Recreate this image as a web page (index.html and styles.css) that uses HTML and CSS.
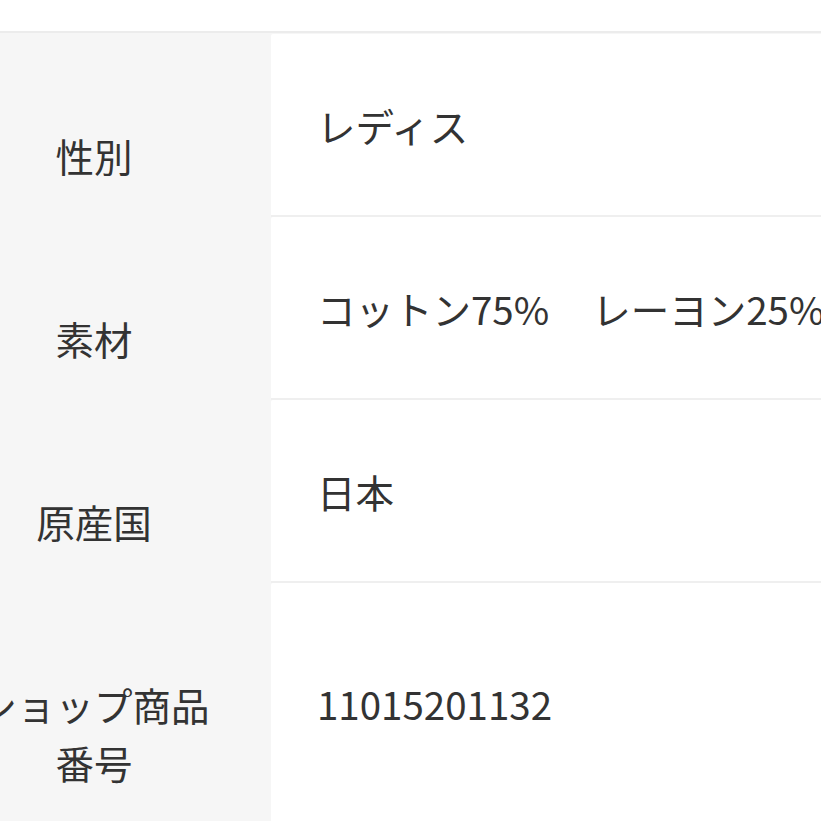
FILE: index.html
```html
<!DOCTYPE html>
<html lang="ja">
<head>
<meta charset="utf-8">
<link rel="stylesheet" href="styles.css">
</head>
<body>
<div class="top"></div>
<div class="spec">
  <div class="label">性別</div>
  <div class="value">レディス</div>
  <div class="label">素材</div>
  <div class="value"><span>コットン75%</span><span class="next">レーヨン25%</span></div>
  <div class="label">原産国</div>
  <div class="value">日本</div>
  <div class="label">ショップ商品番号</div>
  <div class="value">11015201132</div>
</div>
</body>
</html>
```
FILE: styles.css
```css
html, body {
  margin: 0;
  padding: 0;
  background: #ffffff;
  overflow: hidden;
}
body {
  font-family: "Noto Sans CJK JP", "Noto Sans", sans-serif;
  color: #333333;
  font-size: 38.5px;
  line-height: 58px;
  width: 821px;
  height: 821px;
}
.top {
  height: 31px;
  border-bottom: 2px solid #ececec;
}
.spec {
  display: grid;
  grid-template-columns: 354px 1fr;
  margin-left: -83px;
  padding-top: 1px;
  background: #f6f6f6;
}
.label {
  padding: 92px 50px 33px;
  text-align: center;
}
.value {
  background: #ffffff;
  border-bottom: 2px solid #efefef;
  border-top-left-radius: 2px;
  padding-left: 46px;
  display: flex;
  align-items: center;
  white-space: nowrap;
  overflow: hidden;
}
.next {
  margin-left: 43px;
}
```
